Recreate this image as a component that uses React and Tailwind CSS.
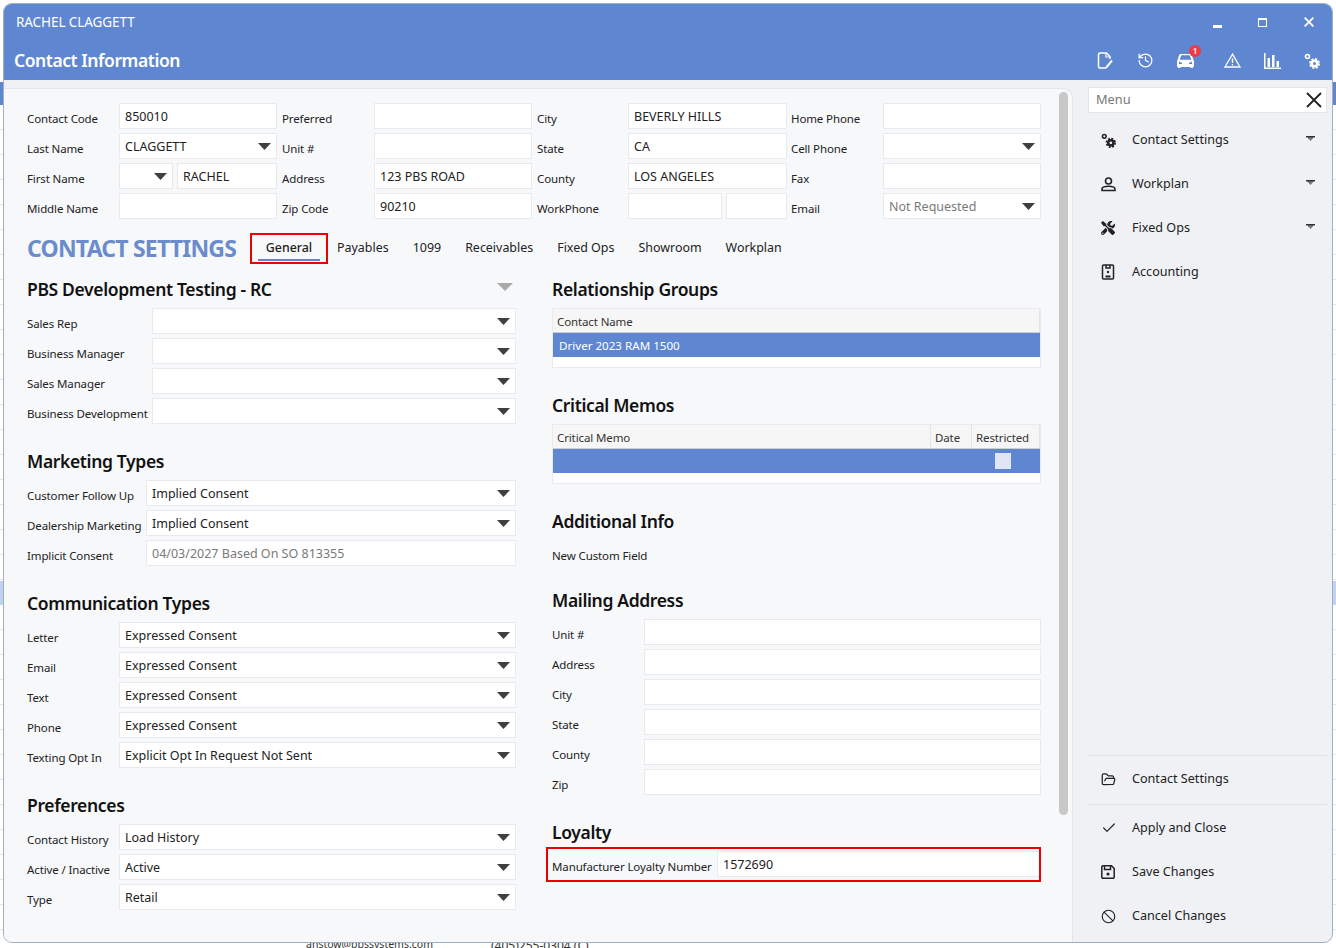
import { Ban, Check, FolderOpen, History } from "lucide-react";
import { FaTools } from "react-icons/fa";

const FONT = "font-['Noto_Sans','Open_Sans',sans-serif]";

function Caret({ className = "" }) {
  return (
    <svg width="13" height="7" viewBox="0 0 13 7" className={className}>
      <polygon points="0,0 13,0 6.5,7" fill="#3f3f3f" />
    </svg>
  );
}

function Field({ value, select, muted, className = "" }) {
  return (
    <div
      className={`h-[26px] bg-white border border-[#e9eaee] pl-[5px] pr-[5px] flex items-center justify-between text-[12.5px] leading-none ${
        muted ? "text-[#7a7a7a]" : "text-[#222]"
      } ${className}`}
    >
      <span className="whitespace-nowrap pt-[3px]">{value}</span>
      {select && <Caret className="mt-[1px]" />}
    </div>
  );
}

function Label({ children, className = "" }) {
  return (
    <div className={`h-[26px] flex items-center pt-[6px] text-[11.5px] tracking-[-0.12px] text-[#222] whitespace-nowrap ${className}`}>
      {children}
    </div>
  );
}

function Heading({ children, className = "" }) {
  return <h2 className={`h-[24px] leading-[24px] text-[17.5px] font-semibold tracking-[-0.35px] text-[#111] ${className}`}>{children}</h2>;
}

function FormRows({ rows, labelWidth }) {
  return (
    <div className="flex flex-col gap-[4px]">
      {rows.map((r) => (
        <div key={r.label} className="flex">
          <Label className={labelWidth}>{r.label}</Label>
          <Field className="flex-1" value={r.value} select={r.select !== false} muted={r.muted} />
        </div>
      ))}
    </div>
  );
}

function GearIcon({ size = 16 }) {
  return (
    <svg width={size} height={size} viewBox="0 0 16 16" fill="none" stroke="currentColor">
      <circle cx="3.5" cy="3.5" r="2" strokeWidth="1.6" />
      <circle cx="10.5" cy="10.5" r="2.8" strokeWidth="2.6" />
      <circle cx="10.5" cy="10.5" r="4.6" strokeWidth="1.8" strokeDasharray="2.1 1.5" />
    </svg>
  );
}

function NoteIcon() {
  return (
    <svg width="16" height="17" viewBox="0 0 16 17" fill="none" stroke="currentColor" strokeWidth="1.5">
      <path d="M9 16H3a1.5 1.5 0 0 1-1.5-1.5v-12A1.5 1.5 0 0 1 3 1h6.500l3.500 3.500V7" />
      <path d="M9 1v4h4" strokeWidth="1.200" />
      <path d="M15 8.500l-5 6-1 1.500" strokeWidth="2" />
    </svg>
  );
}

function CarIcon() {
  return (
    <svg width="17" height="14" viewBox="0 0 17 14">
      <path
        fillRule="evenodd"
        fill="currentColor"
        d="M4 0h9c1 0 1.600.500 2 1.500L16.500 6c.300.500.500 1 .500 1.500V12a1 1 0 0 1-1 1v1h-2.500v-1h-10v1H1v-1a1 1 0 0 1-1-1V7.500C0 7 .200 6.500.500 6L2 1.500C2.400.500 3 0 4 0zm.300 1.200L2.700 5.800h11.600l-1.600-4.600zM2 7.500V10h3V9zm13 0L12 9v1h3z"
      />
    </svg>
  );
}

function AlertIcon() {
  return (
    <svg width="17" height="15" viewBox="0 0 17 15" fill="none" stroke="currentColor" strokeWidth="1.3">
      <path d="M8.500 1.200L16 14H1z" />
      <path d="M8.500 5.500v4.500M8.500 11v1.500" strokeWidth="1.400" />
    </svg>
  );
}

function BarsIcon() {
  return (
    <svg width="17" height="16" viewBox="0 0 17 16" fill="currentColor">
      <rect x="0" y="0" width="1.500" height="16" />
      <rect x="0" y="14.500" width="17" height="1.500" />
      <rect x="3.500" y="5" width="2.500" height="9" />
      <rect x="8" y="2" width="2.500" height="12" />
      <rect x="12.500" y="8" width="2.500" height="6" />
    </svg>
  );
}

function BadgeIcon() {
  return (
    <svg width="14" height="16" viewBox="0 0 14 16" fill="none" stroke="currentColor" strokeWidth="1.500">
      <rect x="1.500" y="1" width="11" height="14" rx="1" />
      <path d="M5 1v3h4V1" />
      <circle cx="7" cy="8" r="1.200" fill="currentColor" stroke="none" />
      <path d="M4.500 12.500h5" strokeWidth="2" />
    </svg>
  );
}

function PersonIcon() {
  return (
    <svg width="15" height="15" viewBox="0 0 15 15" fill="none" stroke="currentColor" strokeWidth="1.600">
      <circle cx="7.500" cy="4" r="3" />
      <path d="M1 13.500v-1.500c0-1.500 2.500-2.700 6.500-2.700s6.500 1.200 6.500 2.700v1.500z" />
    </svg>
  );
}

function FloppyIcon() {
  return (
    <svg width="14" height="14" viewBox="0 0 14 14" fill="none" stroke="currentColor" strokeWidth="1.500">
      <path d="M2 .800h8.500l2.700 2.700V12a1.200 1.200 0 0 1-1.200 1.200H2A1.200 1.200 0 0 1 .800 12V2A1.200 1.200 0 0 1 2 .800z" />
      <path d="M3.500 1v3.500h6V1" />
      <circle cx="7" cy="9" r="1.600" fill="currentColor" stroke="none" />
    </svg>
  );
}

function Cross({ size, width, className = "" }) {
  return (
    <svg width={size} height={size} viewBox="0 0 16 16" className={className} stroke="currentColor" strokeWidth={width}>
      <path d="M1 1l14 14M15 1L1 15" />
    </svg>
  );
}

function SideItem({ icon, label, caret }) {
  return (
    <div className="h-[44px] flex items-center text-[12.6px] text-[#222]">
      <div className="w-[44px] pl-[13px] flex items-center text-[#222]">{icon}</div>
      <span className="flex-1">{label}</span>
      {caret && (
        <svg width="9" height="5" viewBox="0 0 9 5" className="mr-[12px] mb-[4px]">
          <polygon points="0,0 9,0 4.500,5" fill="#777" />
          <rect x="0" y="0" width="9" height="1.400" fill="#333" />
        </svg>
      )}
    </div>
  );
}

function Grid({ heads, checkbox }) {
  return (
    <div className="h-[60px] border border-[#e9eaee] bg-white">
      <div className="h-[24px] flex bg-[#f6f6f6] border-b border-b-[#c9ced8]">
        {heads.map((h) => (
          <div
            key={h.label}
            className={`${h.width} px-[4px] pt-[2px] flex items-center text-[11.5px] tracking-[-0.12px] text-[#333] border-r border-r-[#e4e4e4]`}
          >
            {h.label}
          </div>
        ))}
      </div>
      <div className="h-[24px] pt-[2px] bg-[#5f87d1] flex items-center justify-between text-[11.6px] text-white pl-[6px]">
        <span>{checkbox ? "" : "Driver 2023 RAM 1500"}</span>
        {checkbox && <div className="w-[16px] h-[16px] mb-[2px] bg-[#e1e6f4] mr-[29px]" />}
      </div>
    </div>
  );
}

const topFields = [
  ["Contact Code", { value: "850010" }, "Preferred", { value: "" }, "City", { value: "BEVERLY HILLS" }, "Home Phone", { value: "" }],
  ["Last Name", { value: "CLAGGETT", select: true }, "Unit #", { value: "" }, "State", { value: "CA" }, "Cell Phone", { value: "", select: true }],
  ["First Name", { split: "RACHEL" }, "Address", { value: "123 PBS ROAD" }, "County", { value: "LOS ANGELES" }, "Fax", { value: "" }],
  ["Middle Name", { value: "" }, "Zip Code", { value: "90210" }, "WorkPhone", { phone: true }, "Email", { value: "Not Requested", select: true, muted: true }],
];

const tabs = ["Payables", "1099", "Receivables", "Fixed Ops", "Showroom", "Workplan"];
const backRows = Array.from({ length: 34 }, (_, i) => i);

export default function App() {
  return (
    <div className={`relative w-[1336px] h-[948px] overflow-hidden bg-white ${FONT}`}>
      {/* what shows of the page behind the dialog */}
      <div className="absolute inset-x-0 top-[105px]">
        {backRows.map((i) => (
          <div key={i} className="h-[25px] border-b border-[#e6e6e6]" />
        ))}
      </div>
      <div className="absolute left-[306px] top-[937px] text-[10.5px] text-[#333]">anstow@bbssystems.com</div>
      <div className="absolute left-[491px] top-[937px] text-[12px] text-[#333]">(405)255-0304 (C)</div>
      <div className="absolute left-0 top-[82px] w-full h-[23px] bg-[#5f87d1]" />
      <div className="absolute left-0 top-[581px] w-full h-[24px] bg-[#c0d2f1]" />

      <div className="relative ml-[3px] mt-[3px] w-[1330px] h-[940px] rounded-[9px] overflow-hidden border border-[#9fb0c0] bg-[#eff1f5] flex flex-col">
        <header className="h-[76px] bg-[#5f86d0] text-white shrink-0">
          <div className="h-[37px] flex items-center pl-[12px]">
            <span className="flex-1 text-[13.5px] tracking-[-0.08px]">RACHEL CLAGGETT</span>
            <div className="w-[9px] h-[3px] bg-white mt-[8px] mr-[36px]" />
            <div className="w-[9px] h-[9px] border border-white border-t-[2px] mb-[1px] mr-[37px]" />
            <Cross size={10} width={3} className="mr-[18px] mb-[1px]" />
          </div>
          <div className="h-[39px] flex items-center pl-[10px]">
            <h1 className="flex-1 text-[17.5px] font-semibold tracking-[-0.45px]">Contact Information</h1>
            <div className="flex items-center mr-[10px]">
              <div className="w-[20px] flex justify-center"><NoteIcon /></div>
              <div className="w-[20px] ml-[20px] flex justify-center"><History size={17} strokeWidth={1.8} /></div>
              <div className="relative w-[20px] ml-[20px] flex justify-center">
                <CarIcon />
                <span className="absolute -right-[6px] -top-[9px] w-[12px] h-[12px] rounded-full bg-[#ee3b46] text-[8px] leading-[12px] text-center font-semibold">1</span>
              </div>
              <div className="w-[20px] ml-[27px] flex justify-center"><AlertIcon /></div>
              <div className="w-[20px] ml-[20px] flex justify-center"><BarsIcon /></div>
              <div className="w-[20px] ml-[20px] flex justify-center"><GearIcon /></div>
            </div>
          </div>
        </header>

        <div className="flex-1 flex min-h-0">
          <main className="w-[1069px] mt-[8px] bg-[#f7f8fa] border-t border-r border-[#e3e5ea] rounded-tr-[10px] flex">
            <div className="w-[1055px] pl-[23px] pt-[14px]">
              {/* contact header */}
              <div className="grid grid-cols-[92px_158px_97px_158px_96px_159px_96px_158px] auto-rows-[26px] gap-y-[4px] w-[1014px]">
                {topFields.map((row) =>
                  row.map((cell, i) => {
                    if (i % 2 === 0) {
                      return <Label key={row[0] + i} className={i === 6 ? "pl-[4px]" : i > 0 ? "pl-[5px]" : ""}>{cell}</Label>;
                    }
                    if (cell.split) {
                      return (
                        <div key={row[0] + i} className="flex gap-[4px]">
                          <Field className="w-[54px]" value="" select />
                          <Field className="flex-1" value={cell.split} />
                        </div>
                      );
                    }
                    if (cell.phone) {
                      return (
                        <div key={row[0] + i} className="flex gap-[4px]">
                          <Field className="w-[94px]" value="" />
                          <Field className="flex-1" value="" />
                        </div>
                      );
                    }
                    return <Field key={row[0] + i} {...cell} />;
                  })
                )}
              </div>

              {/* tabs */}
              <div className="flex items-center h-[31px] mt-[14px]">
                <div className="w-[223px] text-[23px] font-bold text-[#6a8ccc] tracking-[-0.8px] whitespace-nowrap">CONTACT SETTINGS</div>
                <div className="w-[78px] h-[31px] border-2 border-[#ee0000] px-[6px] flex flex-col items-center text-[12.4px] font-medium text-[#222]">
                  <span className="flex-1 flex items-center pt-[2px]">General</span>
                  <div className="w-full h-[2px] bg-[#5f87d1] mb-[1px]" />
                </div>
                <div className="flex text-[12.45px] text-[#222] ml-[9px] gap-[24px]">
                  {tabs.map((t) => (
                    <span key={t}>{t}</span>
                  ))}
                </div>
              </div>

              <div className="flex gap-[36px] mt-[13px] w-[1014px]">
                {/* left column */}
                <div className="w-[489px]">
                  <div className="flex items-center justify-between">
                    <Heading>PBS Development Testing - RC</Heading>
                    <svg width="16" height="8" viewBox="0 0 16 8" className="mr-[3px] mb-[4px]">
                      <polygon points="0,0 16,0 8,8" fill="#a9a9a9" />
                    </svg>
                  </div>
                  <div className="mt-[7px]">
                    <FormRows
                      labelWidth="w-[125px]"
                      rows={[
                        { label: "Sales Rep", value: "" },
                        { label: "Business Manager", value: "" },
                        { label: "Sales Manager", value: "" },
                        { label: "Business Development", value: "" },
                      ]}
                    />
                  </div>
                  <Heading className="mt-[25px]">Marketing Types</Heading>
                  <div className="mt-[7px]">
                    <FormRows
                      labelWidth="w-[119px]"
                      rows={[
                        { label: "Customer Follow Up", value: "Implied Consent" },
                        { label: "Dealership Marketing", value: "Implied Consent" },
                        { label: "Implicit Consent", value: "04/03/2027 Based On SO 813355", select: false, muted: true },
                      ]}
                    />
                  </div>
                  <Heading className="mt-[25px]">Communication Types</Heading>
                  <div className="mt-[7px]">
                    <FormRows
                      labelWidth="w-[92px]"
                      rows={[
                        { label: "Letter", value: "Expressed Consent" },
                        { label: "Email", value: "Expressed Consent" },
                        { label: "Text", value: "Expressed Consent" },
                        { label: "Phone", value: "Expressed Consent" },
                        { label: "Texting Opt In", value: "Explicit Opt In Request Not Sent" },
                      ]}
                    />
                  </div>
                  <Heading className="mt-[25px]">Preferences</Heading>
                  <div className="mt-[7px]">
                    <FormRows
                      labelWidth="w-[92px]"
                      rows={[
                        { label: "Contact History", value: "Load History" },
                        { label: "Active / Inactive", value: "Active" },
                        { label: "Type", value: "Retail" },
                      ]}
                    />
                  </div>
                </div>

                {/* right column */}
                <div className="w-[489px]">
                  <Heading>Relationship Groups</Heading>
                  <div className="mt-[7px]">
                    <Grid heads={[{ label: "Contact Name", width: "flex-1" }]} />
                  </div>
                  <Heading className="mt-[25px]">Critical Memos</Heading>
                  <div className="mt-[7px]">
                    <Grid
                      checkbox
                      heads={[
                        { label: "Critical Memo", width: "flex-1" },
                        { label: "Date", width: "w-[41px]" },
                        { label: "Restricted", width: "w-[68px]" },
                      ]}
                    />
                  </div>
                  <Heading className="mt-[25px]">Additional Info</Heading>
                  <Label className="mt-[7px]">New Custom Field</Label>
                  <Heading className="mt-[22px]">Mailing Address</Heading>
                  <div className="mt-[7px]">
                    <FormRows
                      labelWidth="w-[92px]"
                      rows={["Unit #", "Address", "City", "State", "County", "Zip"].map((label) => ({
                        label,
                        value: "",
                        select: false,
                      }))}
                    />
                  </div>
                  <Heading className="mt-[25px]">Loyalty</Heading>
                  <div className="-ml-[6px] mt-[3px] h-[35px] border-2 border-[#ee0000] flex items-center pl-[4px] pb-[2px]">
                    <Label className="w-[165px]">Manufacturer Loyalty Number</Label>
                    <Field className="flex-1 border-r-0" value="1572690" />
                  </div>
                </div>
              </div>
            </div>
            <div className="pt-[3px]">
              <div className="w-[9px] h-[723px] rounded-[5px] bg-[#c8c8c8]" />
            </div>
          </main>

          <aside className="flex-1 flex flex-col justify-between pl-[15px] pr-[5px] pt-[6px] pb-[4px]">
            <div>
              <div className="h-[26px] mt-[1px] bg-white border border-[#e3e5ea] flex items-center justify-between pl-[7px] pr-[4px] text-[12.8px] text-[#777]">
                <span className="pb-[1px]">Menu</span>
                <Cross size={16} width={1.8} className="text-[#222]" />
              </div>
              <div className="mt-[5px]">
                <SideItem icon={<GearIcon size={15} />} label="Contact Settings" caret />
                <SideItem icon={<PersonIcon />} label="Workplan" caret />
                <SideItem icon={<FaTools size={14} />} label="Fixed Ops" caret />
                <SideItem icon={<BadgeIcon />} label="Accounting" />
              </div>
            </div>
            <div>
              <div className="border-t border-[#e0e2e7] pt-[1px]">
                <SideItem icon={<FolderOpen size={15} strokeWidth={2} />} label="Contact Settings" />
                <div className="border-t border-[#e0e2e7] mt-[3px] mb-[1px]" />
              </div>
              <SideItem icon={<Check size={16} strokeWidth={1.8} />} label="Apply and Close" />
              <SideItem icon={<FloppyIcon />} label="Save Changes" />
              <SideItem icon={<Ban size={15} strokeWidth={1.8} />} label="Cancel Changes" />
            </div>
          </aside>
        </div>
      </div>
    </div>
  );
}
